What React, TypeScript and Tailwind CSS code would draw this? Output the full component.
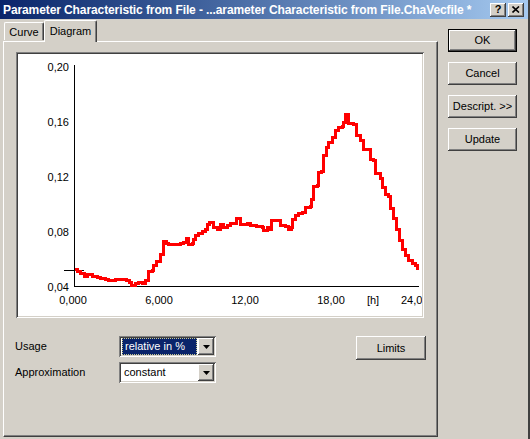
import React from 'react';

const raised =
  'shadow-[inset_-1px_-1px_#404040,inset_1px_1px_#ffffff,inset_-2px_-2px_#808080,inset_2px_2px_#d4d0c8]';
const sunken =
  'shadow-[inset_1px_1px_#808080,inset_-1px_-1px_#ffffff,inset_2px_2px_#404040,inset_-2px_-2px_#d4d0c8]';

const curve =
  'M75 269 H77 V271 H80 V273 H84 V276 H87 V274 H92 V276 H97 V277 H100 V278 H105 V279 H108 V280 H115 V279 H126 V280 H129 V282 H131 V285 H135 V283 H138 V282 H142 V283 H145 V280 H148 V279 V271 H152 V270 H153 V265 H156 V261 H160 V254 H163 V241 H166 V243 H168 V244 H180 V243 H183 V242 H186 V238 H188 V244 H192 V243 H193 V239 H195 V235 H198 V233 H202 V231 H205 V229 H207 V224 H209 V222 H213 V227 H217 V229 H220 V224 H223 V227 H227 V225 H230 V223 H236 V218 H240 V224 H247 V223 H250 V225 H256 V226 H262 V227 H263 V230 H267 V227 H268 V229 H271 V220 H280 V225 H285 V226 H288 V229 H291 V227 H292 V219 H295 V215 H298 V213 H302 V212 H305 V207 H310 V206 H311 V199 H313 V186 H317 V185 H318 V172 H321 V171 H323 V155 H326 V147 H328 V142 H332 V137 H335 V130 H338 V127 H342 V126 H343 V122 H345 V114 H348 V123 H353 V124 H356 V135 H360 V140 H363 V149 H367 V149 H370 V159 H373 V160 H375 V173 H380 V178 H382 V187 H385 V194 H388 V196 H390 V208 H393 V218 H396 V229 H399 V240 H402 V249 H405 V255 H408 V260 H412 V263 H415 V265 H417 V270';

const yLabels = [
  { t: '0,20', y: 71 },
  { t: '0,16', y: 126 },
  { t: '0,12', y: 181 },
  { t: '0,08', y: 236 },
  { t: '0,04', y: 291 },
];

const xLabels = [
  { t: '0,000', x: 73 },
  { t: '6,000', x: 159 },
  { t: '12,00', x: 245 },
  { t: '18,00', x: 331 },
  { t: '[h]', x: 373 },
];

function Button({ label, isDefault }: { label: string; isDefault?: boolean }) {
  if (isDefault) {
    return (
      <div className="w-[69px] h-[23px] border border-black">
        <div className={`w-full h-full flex items-center justify-center ${raised}`}>{label}</div>
      </div>
    );
  }
  return (
    <div className={`w-[69px] h-[23px] flex items-center justify-center ${raised}`}>{label}</div>
  );
}

function Combo({ value, selected }: { value: string; selected?: boolean }) {
  return (
    <div className={`w-[97px] h-[21px] bg-white flex items-center p-[2px] ${sunken}`}>
      <div className="flex-1 h-full flex items-center pl-[1px] pr-[1px]">
        {selected ? (
          <div className="w-full h-full bg-[#0a246a] text-white flex items-center pl-[2px] border border-dotted border-[#c8c890]">
            {value}
          </div>
        ) : (
          <div className="pl-[2px]">{value}</div>
        )}
      </div>
      <div className={`w-[16px] h-[17px] bg-[#d4d0c8] flex items-center justify-center ${raised}`}>
        <svg width="7" height="4" viewBox="0 0 7 4">
          <path d="M0 0 H7 L3.5 4 Z" fill="#000" />
        </svg>
      </div>
    </div>
  );
}

export default function App() {
  return (
    <div
      className="w-[530px] h-[439px] bg-[#d4d0c8] flex flex-col text-[11px] text-black border-r-2 border-r-[#404040] overflow-hidden"
      style={{ fontFamily: '"Liberation Sans", Arial, sans-serif' }}
    >
      <div className="h-[19px] shrink-0 flex items-center bg-gradient-to-r from-[#0a246a] to-[#a6caf0] pl-[3px] pr-[4px]">
        <div className="flex-1 text-white font-bold text-[12px] tracking-[-0.1px] whitespace-nowrap overflow-hidden">
          Parameter Characteristic from File - ...arameter Characteristic from File.ChaVecfile *
        </div>
        <div className="flex gap-[2px]">
          <div className={`w-[16px] h-[14px] bg-[#d4d0c8] flex items-center justify-center font-bold text-[11px] leading-none ${raised}`}>
            ?
          </div>
          <div className={`w-[16px] h-[14px] bg-[#d4d0c8] flex items-center justify-center ${raised}`}>
            <svg width="8" height="7" viewBox="0 0 8 7">
              <path d="M0.5 0.5 L7 6.5 M7 0.5 L0.5 6.5" stroke="#000" strokeWidth="1.6" />
            </svg>
          </div>
        </div>
      </div>

      <div className="flex flex-1">
        <div className="w-[435px] ml-[3px] flex flex-col">
          <div className="h-[22px] flex items-end pl-[1px]">
            <div className="h-[18px] w-[40px] border-t border-l border-white border-r border-r-[#404040] rounded-t-[2px] flex items-center justify-center pt-[1px] mb-[1px] shadow-[inset_-1px_0_#808080]">
              Curve
            </div>
            <div className="relative z-10 -mb-[1px] h-[22px] w-[53px] bg-[#d4d0c8] border-t border-l border-white border-r border-r-[#404040] rounded-t-[2px] flex items-start justify-center pt-[2px] shadow-[inset_-1px_0_#808080]">
              Diagram
            </div>
          </div>
          <div className="h-[396px] border-t border-l border-white border-r border-b border-r-[#404040] border-b-[#404040] shadow-[inset_-1px_-1px_#808080] flex flex-col">
            <div className={`ml-[12px] mt-[10px] w-[408px] h-[266px] bg-white p-[2px] ${sunken}`}>
              <svg width="404" height="262" viewBox="18 54 404 262" className="block">
                <line x1="74.5" y1="65" x2="74.5" y2="287" stroke="#000" strokeWidth="1" />
                <line x1="74" y1="286.5" x2="419" y2="286.5" stroke="#000" strokeWidth="1" />
                <line x1="64" y1="270.5" x2="84" y2="270.5" stroke="#000" strokeWidth="1" />
                {yLabels.map((l) => (
                  <text key={l.t} x="69" y={l.y} textAnchor="end" fontSize="11" fontFamily="Liberation Sans, Arial, sans-serif">
                    {l.t}
                  </text>
                ))}
                {xLabels.map((l) => (
                  <text key={l.t} x={l.x} y="304" textAnchor="middle" fontSize="11" fontFamily="Liberation Sans, Arial, sans-serif">
                    {l.t}
                  </text>
                ))}
                <text x="401" y="304" fontSize="11" fontFamily="Liberation Sans, Arial, sans-serif">
                  24,0
                </text>
                <path d={curve} fill="none" stroke="#ff0000" strokeWidth="3" shapeRendering="crispEdges" />
              </svg>
            </div>
            <div className="flex pl-[11px] pr-[11px] mt-[18px]">
              <div className="grid grid-cols-[104px_97px] gap-y-[5px] items-center">
                <div>Usage</div>
                <Combo value="relative in %" selected />
                <div>Approximation</div>
                <Combo value="constant" />
              </div>
              <div className="ml-auto">
                <div className={`w-[70px] h-[24px] flex items-center justify-center ${raised}`}>Limits</div>
              </div>
            </div>
          </div>
        </div>
        <div className="ml-[10px] pt-[10px] flex flex-col gap-[10px]">
          <Button label="OK" isDefault />
          <Button label="Cancel" />
          <Button label="Descript. >>" />
          <Button label="Update" />
        </div>
      </div>
    </div>
  );
}
